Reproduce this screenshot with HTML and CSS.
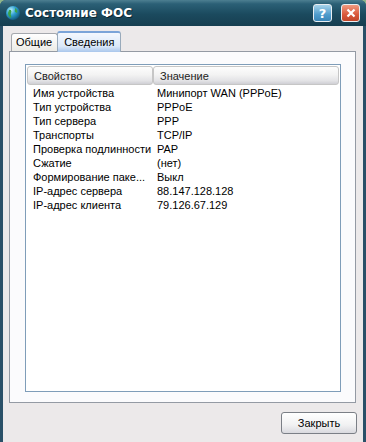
FILE: index.html
```html
<!DOCTYPE html>
<html lang="ru">
<head>
  <meta charset="UTF-8">
  <title>Состояние ФОС</title>
  <link rel="stylesheet" href="styles.css">
</head>
<body>
  <div class="window">
    <!-- title bar -->
    <div class="titlebar">
      <svg class="app-icon" width="16" height="16" viewBox="0 0 16 16">
        <defs>
          <radialGradient id="globe" cx="0.35" cy="0.3" r="0.8">
            <stop offset="0" stop-color="#b8f0ff"/>
            <stop offset="0.45" stop-color="#2f9fd0"/>
            <stop offset="1" stop-color="#0b4d6e"/>
          </radialGradient>
        </defs>
        <circle cx="8" cy="8" r="7" fill="url(#globe)"/>
        <path d="M4 5 C6 4 7 6 6 8 C5 10 7 11 6 13 C4 12 3 10 3 8 Z" fill="#3aa34a"/>
        <path d="M10 3 C12 4 13 6 12 8 C11 7 9 7 10 5 Z" fill="#3aa34a"/>
      </svg>
      <span class="title">Состояние ФОС</span>
      <div class="caption-buttons">
        <span class="cap-btn help">?</span>
        <span class="cap-btn close">
          <svg width="10" height="10" viewBox="0 0 10 10"><path d="M1.5 1.5 L8.5 8.5 M8.5 1.5 L1.5 8.5" stroke="#fff" stroke-width="2.2"/></svg>
        </span>
      </div>
    </div>

    <div class="client">
      <div class="tabs">
        <div class="tab">Общие</div>
        <div class="tab active">Сведения</div>
      </div>

      <div class="panel">
        <div class="list">
          <div class="list-header">
            <div class="col col-name">Свойство</div>
            <div class="col col-value">Значение</div>
          </div>
          <div class="row"><span class="c1">Имя устройства</span><span class="c2">Минипорт WAN (PPPoE)</span></div>
          <div class="row"><span class="c1">Тип устройства</span><span class="c2">PPPoE</span></div>
          <div class="row"><span class="c1">Тип сервера</span><span class="c2">PPP</span></div>
          <div class="row"><span class="c1">Транспорты</span><span class="c2">TCP/IP</span></div>
          <div class="row"><span class="c1">Проверка подлинности</span><span class="c2">PAP</span></div>
          <div class="row"><span class="c1">Сжатие</span><span class="c2">(нет)</span></div>
          <div class="row"><span class="c1">Формирование паке...</span><span class="c2">Выкл</span></div>
          <div class="row"><span class="c1">IP-адрес сервера</span><span class="c2">88.147.128.128</span></div>
          <div class="row"><span class="c1">IP-адрес клиента</span><span class="c2">79.126.67.129</span></div>
        </div>
      </div>

      <div class="footer">
        <button class="btn">Закрыть</button>
      </div>
    </div>
  </div>
</body>
</html>
```

FILE: styles.css
```css
* {
  box-sizing: border-box;
}

body {
  margin: 0;
  width: 366px;
  height: 442px;
  overflow: hidden;
  font-family: 'Liberation Sans', Arial, sans-serif;
  font-size: 11px;
  color: #000;
  background: #8fb58a;
}

.window {
  width: 366px;
  height: 442px;
  display: flex;
  flex-direction: column;
  background: #2a5068;
  padding: 0 3px;
  border-radius: 6px 6px 0 0;
  overflow: hidden;
}

.titlebar {
  height: 26px;
  flex: none;
  display: flex;
  align-items: center;
  padding: 0 3px;
  margin: 0 -3px;
  background: linear-gradient(to bottom, #4d7f91 0%, #2b6076 15%, #1b4a5e 55%, #163e50 100%);
}

.app-icon {
  margin-left: 2px;
  margin-right: 4px;
}

.title {
  font-family: 'DejaVu Sans', sans-serif;
  font-weight: bold;
  font-size: 12px;
  color: #fff;
  text-shadow: 1px 1px 0 #0b2530;
  flex: 1;
}

.caption-buttons {
  display: flex;
  gap: 9px;
  margin-right: 3px;
}

.cap-btn {
  width: 19px;
  height: 18px;
  border: 1px solid #e8eef2;
  border-radius: 3px;
  display: flex;
  align-items: center;
  justify-content: center;
  color: #fff;
  font-family: 'DejaVu Sans', sans-serif;
  font-weight: bold;
  font-size: 13px;
}

.cap-btn.help {
  background: linear-gradient(to bottom, #a7d3ea, #4f9ccc 60%, #3a86b8);
}

.cap-btn.close {
  background: linear-gradient(to bottom, #f09a80, #d9583b 60%, #c14529);
}

.client {
  flex: 1;
  background: #ece9ea;
  display: flex;
  flex-direction: column;
  padding: 4px 6px 0 6px;
}

.tabs {
  display: flex;
  align-items: flex-end;
  height: 21px;
  padding-left: 2px;
  position: relative;
  z-index: 1;
}

.tab {
  height: 18px;
  padding: 2px 5px 0 4px;
  border: 1px solid #a5a8ad;
  border-bottom: none;
  border-radius: 3px 3px 0 0;
  background: linear-gradient(to bottom, #ffffff, #ecebe6);
}

.tab.active {
  height: 21px;
  padding: 3px 6px 0 6px;
  margin-left: -1px;
  border-color: #9ab;
  border-top: 2px solid #7ba4d8;
  background: linear-gradient(to bottom, #f4f8fe, #dbe8f8 70%, #a9c6ec);
  margin-bottom: -1px;
}

.panel {
  height: 352px;
  margin-right: 1px;
  border: 1px solid #949aa4;
  background: #fbfbfd;
  padding: 12px 14px 0 15px;
}

.list {
  height: 328px;
  border: 1px solid #7f9db9;
  background: #fff;
  padding: 1px;
}

.list-header {
  display: flex;
  height: 19px;
}

.col {
  height: 19px;
  padding: 3px 0 0 6px;
  border: 1px solid #c6c6c6;
  border-radius: 3px;
  background: linear-gradient(to bottom, #fdfdfd 0%, #f3f3f3 45%, #e3e3e6 80%, #cfcfd4 100%);
  color: #222;
}

.col-name {
  width: 126px;
}

.col-value {
  flex: 1;
}

.row {
  display: flex;
  height: 14px;
  line-height: 14px;
  white-space: nowrap;
}

.list-header + .row {
  margin-top: 1px;
}

.c1 {
  width: 126px;
  padding-left: 6px;
  overflow: hidden;
}

.c2 {
  padding-left: 4px;
}

.footer {
  display: flex;
  justify-content: flex-end;
  padding-top: 9px;
  padding-right: 0;
}

.btn {
  width: 76px;
  height: 22px;
  font-family: 'Liberation Sans', Arial, sans-serif;
  font-size: 11px;
  color: #000;
  border: 1px solid #7b7f86;
  border-radius: 3px;
  background: linear-gradient(to bottom, #ffffff 0%, #f1f1f2 60%, #d9d9de 100%);
  padding: 0;
}
```
